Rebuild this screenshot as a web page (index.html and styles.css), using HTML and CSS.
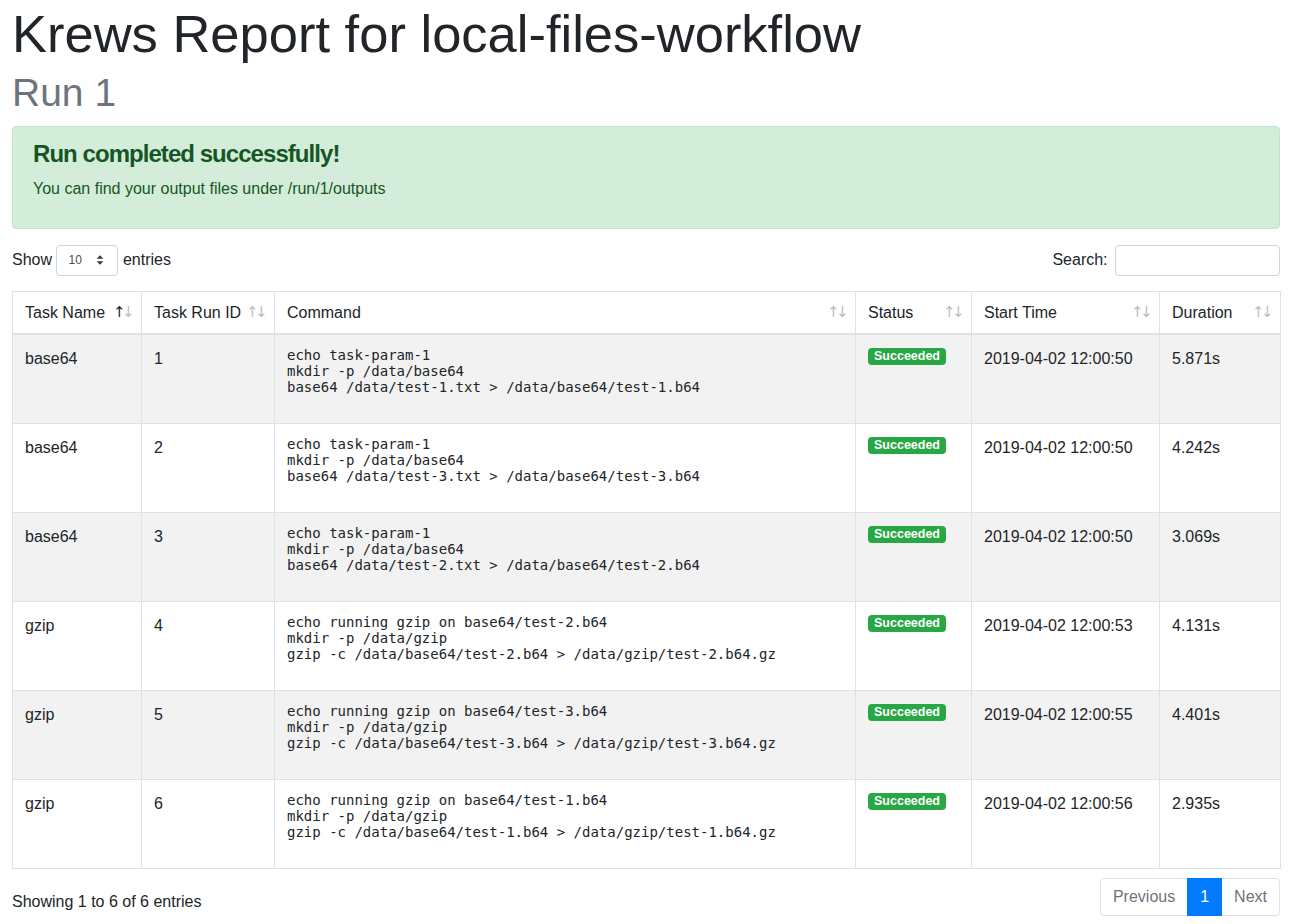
FILE: index.html
```html
<!DOCTYPE html>
<html lang="en">
<head>
<meta charset="utf-8">
<title>Krews Report for local-files-workflow</title>
<link rel="stylesheet" href="styles.css">
</head>
<body>
<div class="container">
  <h1 class="title">Krews Report for local-files-workflow</h1>
  <h2 class="subtitle">Run 1</h2>
  <div class="alert">
    <h4 class="alert-heading">Run completed successfully!</h4>
    <p class="alert-text">You can find your output files under /run/1/outputs</p>
  </div>
  <div class="controls">
    <div class="length">Show <span class="select"><span class="select-value">10</span><svg class="select-arrows" width="8" height="12" viewBox="0 0 8 12"><polygon points="0.6,4.8 4,1.2 7.4,4.8" fill="#3a3a3a"/><polygon points="0.6,7.2 4,10.8 7.4,7.2" fill="#3a3a3a"/></svg></span> entries</div>
    <div class="search">Search: <span class="search-input"></span></div>
  </div>
  <table class="data">
    <colgroup>
      <col class="c-name"><col class="c-id"><col class="c-cmd"><col class="c-status"><col class="c-start"><col class="c-dur">
    </colgroup>
    <thead>
      <tr>
        <th class="sorting sorting-asc">Task Name</th>
        <th class="sorting">Task Run ID</th>
        <th class="sorting">Command</th>
        <th class="sorting">Status</th>
        <th class="sorting">Start Time</th>
        <th class="sorting">Duration</th>
      </tr>
    </thead>
    <tbody>
      <tr class="odd">
        <td>base64</td><td>1</td>
        <td><pre class="cmd">echo task-param-1
mkdir -p /data/base64
base64 /data/test-1.txt &gt; /data/base64/test-1.b64</pre></td>
        <td><span class="badge">Succeeded</span></td><td>2019-04-02 12:00:50</td><td>5.871s</td>
      </tr>
      <tr>
        <td>base64</td><td>2</td>
        <td><pre class="cmd">echo task-param-1
mkdir -p /data/base64
base64 /data/test-3.txt &gt; /data/base64/test-3.b64</pre></td>
        <td><span class="badge">Succeeded</span></td><td>2019-04-02 12:00:50</td><td>4.242s</td>
      </tr>
      <tr class="odd">
        <td>base64</td><td>3</td>
        <td><pre class="cmd">echo task-param-1
mkdir -p /data/base64
base64 /data/test-2.txt &gt; /data/base64/test-2.b64</pre></td>
        <td><span class="badge">Succeeded</span></td><td>2019-04-02 12:00:50</td><td>3.069s</td>
      </tr>
      <tr>
        <td>gzip</td><td>4</td>
        <td><pre class="cmd">echo running gzip on base64/test-2.b64
mkdir -p /data/gzip
gzip -c /data/base64/test-2.b64 &gt; /data/gzip/test-2.b64.gz</pre></td>
        <td><span class="badge">Succeeded</span></td><td>2019-04-02 12:00:53</td><td>4.131s</td>
      </tr>
      <tr class="odd">
        <td>gzip</td><td>5</td>
        <td><pre class="cmd">echo running gzip on base64/test-3.b64
mkdir -p /data/gzip
gzip -c /data/base64/test-3.b64 &gt; /data/gzip/test-3.b64.gz</pre></td>
        <td><span class="badge">Succeeded</span></td><td>2019-04-02 12:00:55</td><td>4.401s</td>
      </tr>
      <tr>
        <td>gzip</td><td>6</td>
        <td><pre class="cmd">echo running gzip on base64/test-1.b64
mkdir -p /data/gzip
gzip -c /data/base64/test-1.b64 &gt; /data/gzip/test-1.b64.gz</pre></td>
        <td><span class="badge">Succeeded</span></td><td>2019-04-02 12:00:56</td><td>2.935s</td>
      </tr>
    </tbody>
  </table>
  <div class="footer">
    <div class="info">Showing 1 to 6 of 6 entries</div>
    <ul class="pagination">
      <li class="page-item disabled"><span class="page-link first">Previous</span></li>
      <li class="page-item active"><span class="page-link">1</span></li>
      <li class="page-item disabled"><span class="page-link last">Next</span></li>
    </ul>
  </div>
</div>
</body>
</html>
```
FILE: styles.css
```css
* { box-sizing: border-box; }
html, body { margin: 0; padding: 0; background: #fff; }
body {
  font-family: "Liberation Sans", Arial, sans-serif;
  font-size: 16px;
  line-height: 1.5;
  color: #212529;
}
.container { padding: 2px 11px 0 12px; }

.title {
  margin: 0;
  font-size: 52.5px;
  font-weight: 400;
  line-height: 1.2;
  color: #212529;
}
.subtitle {
  margin: 5px 0 9px;
  font-size: 39px;
  font-weight: 400;
  line-height: 1.2;
  color: #6c757d;
}

.alert {
  background: #d4edda;
  border: 1px solid #c3e6cb;
  border-radius: 4px;
  color: #155724;
  padding: 13px 20px 12px;
  margin-bottom: 16px;
}
.alert-heading {
  margin: 0 0 8px;
  font-size: 24px;
  font-weight: 700;
  line-height: 1.2;
  letter-spacing: -0.95px;
}
.alert-text { margin: 0 0 15px; }

.controls {
  display: flex;
  justify-content: space-between;
  align-items: center;
  height: 31px;
  margin-bottom: 15px;
}
.length, .search { display: flex; align-items: center; white-space: pre; }
.select {
  display: inline-flex;
  align-items: center;
  justify-content: space-between;
  width: 62px;
  height: 31px;
  padding: 0 13px 0 11px;
  border: 1px solid #ced4da;
  border-radius: 4px;
  background: #fff;
  font-size: 12px;
  color: #495057;
}
.search-input {
  display: inline-block;
  width: 165px;
  height: 31px;
  border: 1px solid #ced4da;
  border-radius: 4px;
  background: #fff;
  margin-left: 3px;
}

.data {
  width: 100%;
  border-collapse: collapse;
  table-layout: fixed;
  border: 1px solid #dee2e6;
}
.c-name { width: 129px; }
.c-id { width: 133px; }
.c-cmd { width: 581px; }
.c-status { width: 116px; }
.c-start { width: 188px; }
.c-dur { width: 121px; }

.data th, .data td {
  border: 1px solid #dee2e6;
  text-align: left;
  vertical-align: top;
}
.data th {
  position: relative;
  font-weight: 400;
  padding: 9px 30px 8px 12px;
  border-bottom: 2px solid #dee2e6;
  white-space: nowrap;
}
.data td { padding: 12px; }
.data tr.odd td { background: #f2f2f2; }

.sorting::before, .sorting::after {
  position: absolute;
  bottom: 9px;
  display: block;
  width: 10px;
  text-align: center;
  font-family: "DejaVu Sans", sans-serif;
  font-size: 15px;
  line-height: 24px;
  opacity: 0.3;
}
.sorting::before { content: "\2191"; right: 18px; }
.sorting::after { content: "\2193"; right: 9px; }
.sorting-asc::before { opacity: 1; }

.cmd {
  margin: 0 0 16px;
  font-family: "DejaVu Sans Mono", "Liberation Mono", monospace;
  font-size: 14px;
  line-height: 16px;
  color: #212529;
  white-space: pre;
}

.badge {
  display: inline-block;
  vertical-align: top;
  margin-top: 1px;
  padding: 2.5px 6px;
  font-size: 12.5px;
  font-weight: 700;
  line-height: 1;
  color: #fff;
  background: #28a745;
  border-radius: 4px;
}

.footer {
  display: flex;
  justify-content: space-between;
  align-items: flex-start;
}
.info { padding-top: 21px; }
.pagination {
  display: flex;
  list-style: none;
  margin: 9px 0 0;
  padding: 0;
}
.page-link {
  display: block;
  padding: 8px 12px;
  line-height: 20px;
  border: 1px solid #dee2e6;
  margin-left: -1px;
  background: #fff;
  color: #6c757d;
}
.page-link.first { margin-left: 0; border-radius: 4px 0 0 4px; }
.page-link.last { border-radius: 0 4px 4px 0; }
.active .page-link {
  background: #007bff;
  border-color: #007bff;
  color: #fff;
  position: relative;
  z-index: 1;
}
```
